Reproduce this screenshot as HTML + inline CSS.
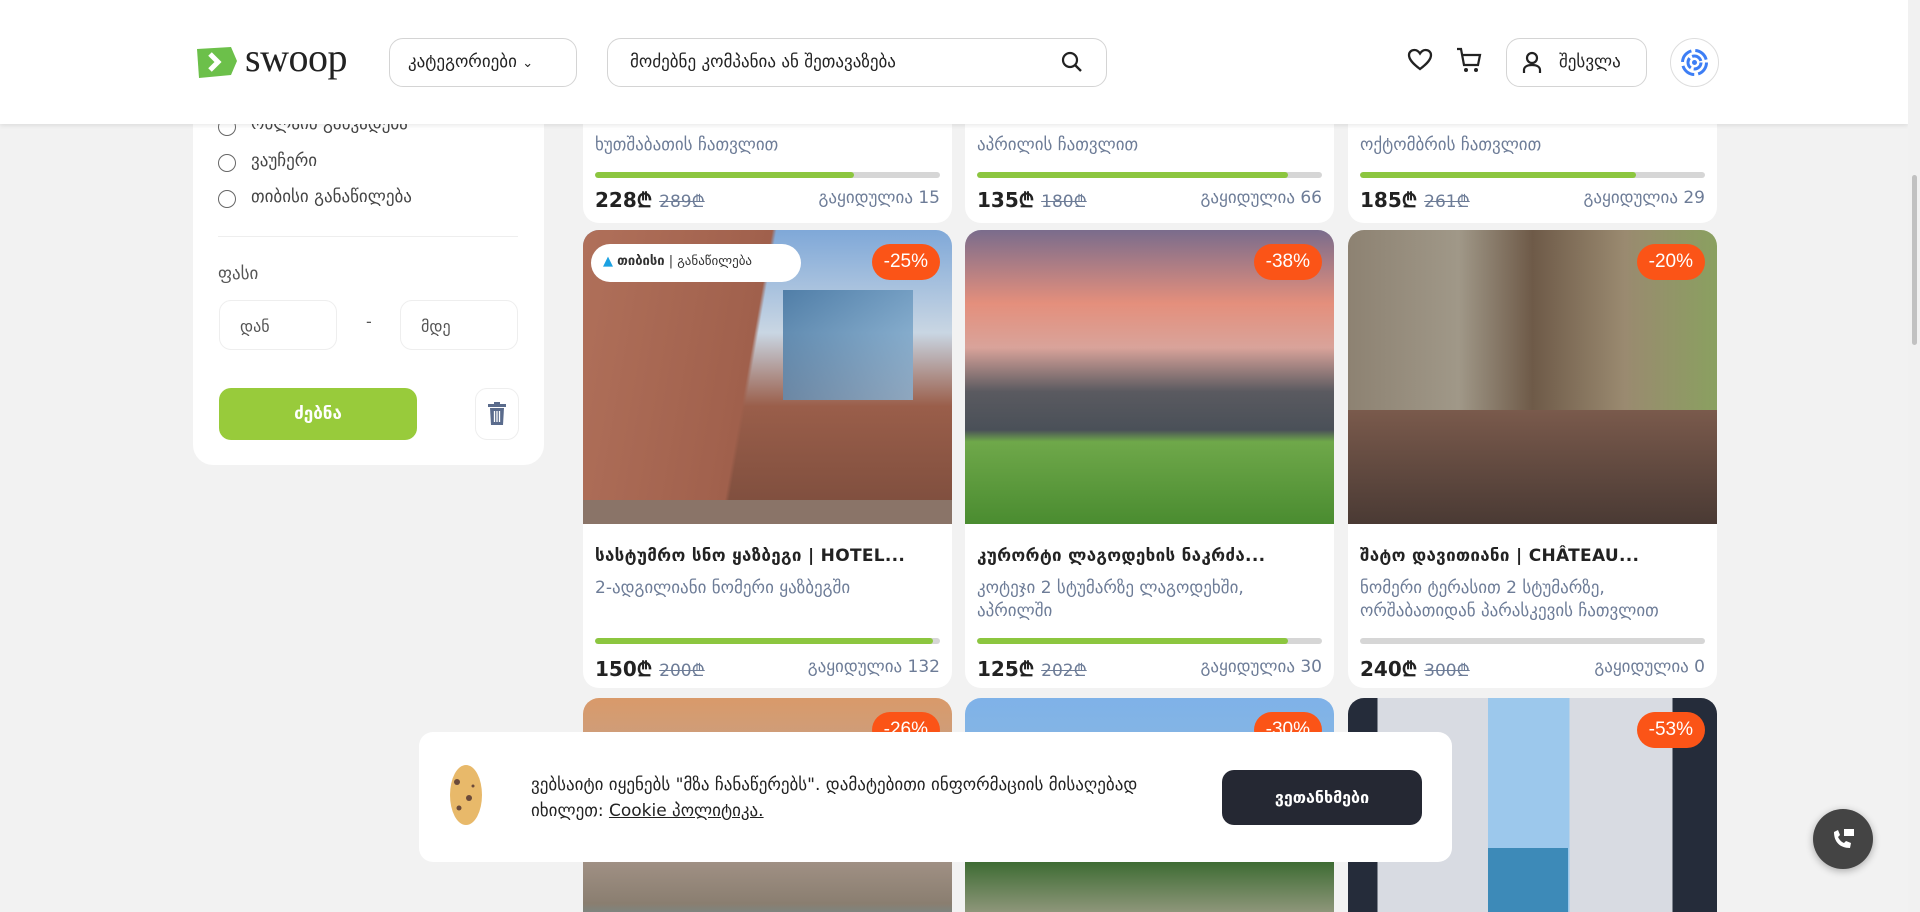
<!DOCTYPE html>
<html><head><meta charset="utf-8"><style>
*{box-sizing:border-box;margin:0;padding:0}
html,body{width:1920px;height:912px;overflow:hidden}
body{background:#f2f2f2;font-family:"DejaVu Sans","Liberation Sans",sans-serif;position:relative;color:#222}
.a{position:absolute}
.hdr{left:0;top:0;width:1908px;height:124px;background:#fff;box-shadow:0 2px 4px rgba(0,0,0,.08);z-index:5}
.sb{left:1908px;top:0;width:12px;height:912px;background:#f1f1f1;z-index:6}
.thumb{left:1912px;top:175px;width:5px;height:170px;background:#c1c1c1;border-radius:3px;z-index:7}
.btn{border:1px solid #d4d4d4;border-radius:14px;background:#fff}
.side{left:193px;top:100px;width:351px;height:365px;background:#fff;border-radius:0 0 20px 20px}
.radio{width:18px;height:18px;border:1.5px solid #666;border-radius:50%}
.rl{font-size:17px;color:#444}
.inp{border:1px solid #eee;border-radius:12px;background:#fff;font-size:16px;color:#555;padding:16px 20px}
.card{background:#fff;border-radius:16px;overflow:hidden;width:369px}
.img{position:absolute;left:0;top:0;width:369px;height:294px}
.badge{position:absolute;right:12px;top:14px;background:#fb5417;color:#fff;border-radius:18px;padding:7px 12px;font-family:"Liberation Sans",sans-serif;font-size:19px}
.tt{position:absolute;left:12px;top:316px;font-size:17px;font-weight:bold;white-space:nowrap;color:#222;letter-spacing:.3px}
.ds{position:absolute;left:12px;font-size:17px;color:#6d7c97;line-height:23px;width:345px}
.bar{position:absolute;left:12px;width:345px;height:6px;border-radius:3px;background:#d6d6d6;overflow:hidden}
.bar i{display:block;height:6px;background:#8cc63f;border-radius:3px}
.pr{position:absolute;left:12px;font-size:20px;font-weight:bold;color:#222}
.pr s{font-size:17px;font-weight:normal;color:#6d7c97}
.sold{position:absolute;right:12px;font-size:17px;color:#6d7c97}
</style></head><body>
<div class="a hdr">
 <svg class="a" style="left:193px;top:45px" width="46" height="34" viewBox="0 0 46 34"><path d="M4 4 L38 2 L44 16 L38 30 L6 33 Z" fill="#6cc04a"/><path d="M17 9 L25 17 L17 25" stroke="#fff" stroke-width="5" fill="none"/></svg>
 <div class="a" style="left:245px;top:34px;font:40px 'Liberation Serif',serif;color:#222;letter-spacing:-.5px">swoop</div>
 <div class="a btn" style="left:389px;top:38px;width:188px;height:49px;font-size:17px;padding:13px 18px">კატეგორიები <span style="font-size:13px">&#8964;</span></div>
 <div class="a btn" style="left:607px;top:38px;width:500px;height:49px;font-size:17px;padding:13px 22px">მოძებნე კომპანია ან შეთავაზება</div>
 <svg class="a" style="left:1061px;top:51px" width="22" height="22" viewBox="0 0 22 22"><circle cx="9" cy="9" r="7" stroke="#222" stroke-width="2.2" fill="none"/><path d="M14 14 L20 20" stroke="#222" stroke-width="2.4"/></svg>
 <svg class="a" style="left:1407px;top:48px" width="26" height="24" viewBox="0 0 26 24"><path d="M13 21 C5 15 2 11 2 7 C2 4 4.5 2 7.5 2 C10 2 12 4 13 5.5 C14 4 16 2 18.5 2 C21.5 2 24 4 24 7 C24 11 21 15 13 21Z" stroke="#222" stroke-width="2.3" fill="none"/></svg>
 <svg class="a" style="left:1455px;top:46px" width="28" height="28" viewBox="0 0 28 28"><path d="M2 3 H6 L9 19 H23 L25 9 H7" stroke="#222" stroke-width="2.2" fill="none"/><circle cx="11" cy="24" r="2" fill="#222"/><circle cx="21" cy="24" r="2" fill="#222"/></svg>
 <div class="a btn" style="left:1506px;top:38px;width:141px;height:49px;font-size:17px;padding:13px 0 0 52px">შესვლა</div>
 <svg class="a" style="left:1521px;top:51px" width="22" height="24" viewBox="0 0 22 24"><circle cx="11" cy="7" r="5" stroke="#222" stroke-width="2.2" fill="none"/><path d="M3 22 V19 C3 16 6 14 11 14 C16 14 19 16 19 19 V22" stroke="#222" stroke-width="2.2" fill="none"/></svg>
 <div class="a" style="left:1670px;top:38px;width:49px;height:49px;border:1px solid #ddd;border-radius:50%"></div>
 <svg class="a" style="left:1679px;top:47px" width="31" height="31" viewBox="0 0 31 31"><circle cx="15.5" cy="15.5" r="12" stroke="#3d7ef5" stroke-width="3" fill="none" stroke-dasharray="15 4"/><circle cx="15.5" cy="15.5" r="6.5" stroke="#3d7ef5" stroke-width="3" fill="none" stroke-dasharray="11 3"/><circle cx="15.5" cy="15.5" r="2.5" fill="#3d7ef5"/></svg>
</div>
<div class="a sb"></div><div class="a thumb"></div>

<div class="a side">
 <div class="a radio" style="left:25px;top:18px"></div><div class="a rl" style="left:58px;top:14px">ონლაინ განვადება</div>
 <div class="a radio" style="left:25px;top:54px"></div><div class="a rl" style="left:58px;top:51px">ვაუჩერი</div>
 <div class="a radio" style="left:25px;top:90px"></div><div class="a rl" style="left:58px;top:87px">თიბისი განაწილება</div>
 <div class="a" style="left:25px;top:136px;width:300px;height:1px;background:#eee"></div>
 <div class="a" style="left:25px;top:164px;font-size:17px;color:#555">ფასი</div>
 <div class="a inp" style="left:26px;top:200px;width:118px;height:50px">დან</div>
 <div class="a" style="left:173px;top:212px;color:#555">-</div>
 <div class="a inp" style="left:207px;top:200px;width:118px;height:50px">მდე</div>
 <div class="a" style="left:26px;top:288px;width:198px;height:52px;background:#98cb3b;border-radius:12px;color:#fff;font-weight:bold;font-size:17px;text-align:center;line-height:52px">ძებნა</div>
 <div class="a" style="left:282px;top:288px;width:44px;height:52px;border:1px solid #eee;border-radius:12px"></div>
 <svg class="a" style="left:294px;top:302px" width="20" height="24" viewBox="0 0 20 24"><rect x="1" y="2" width="18" height="3" fill="#5a6b8c"/><rect x="7" y="0" width="6" height="3" fill="#5a6b8c"/><path d="M3 6 H17 L16 23 H4 Z" fill="#5a6b8c"/><path d="M7.5 9 V20 M10 9 V20 M12.5 9 V20" stroke="#fff" stroke-width="1.3"/></svg>
</div>

<div class="a card" style="left:583px;top:100px;height:123px">
 <div class="ds" style="top:34px">ხუთშაბათის ჩათვლით</div>
 <div class="bar" style="top:72px"><i style="width:75%"></i></div>
 <div class="pr" style="top:86px">228₾ <s>289₾</s></div><div class="sold" style="top:88px">გაყიდულია 15</div>
</div>
<div class="a card" style="left:965px;top:100px;height:123px">
 <div class="ds" style="top:34px">აპრილის ჩათვლით</div>
 <div class="bar" style="top:72px"><i style="width:90%"></i></div>
 <div class="pr" style="top:86px">135₾ <s>180₾</s></div><div class="sold" style="top:88px">გაყიდულია 66</div>
</div>
<div class="a card" style="left:1348px;top:100px;height:123px">
 <div class="ds" style="top:34px">ოქტომბრის ჩათვლით</div>
 <div class="bar" style="top:72px"><i style="width:80%"></i></div>
 <div class="pr" style="top:86px">185₾ <s>261₾</s></div><div class="sold" style="top:88px">გაყიდულია 29</div>
</div>

<div class="a card" style="left:583px;top:230px;height:458px">
 <div class="img" style="background:linear-gradient(100deg,#b0705a 0%,#a0604c 45%,transparent 46%),linear-gradient(180deg,#7fa8d8 0%,#c9d6e3 35%,#9a5e4a 60%,#7a4c3c 100%)"></div>
 <div class="a" style="left:200px;top:60px;width:130px;height:110px;background:linear-gradient(135deg,#3a6d9a,#8bb6d8);opacity:.8"></div>
 <div class="a" style="left:0;top:270px;width:369px;height:24px;background:#8a7468"></div>
 <div class="a" style="left:8px;top:14px;width:210px;height:38px;background:#fff;border-radius:19px;font-size:13px;color:#333;padding:10px 0 0 12px"><span style="color:#1ba1e2">▲</span> <b>თიბისი</b> | განაწილება</div>
 <div class="badge">-25%</div>
 <div class="tt">სასტუმრო სნო ყაზბეგი | HOTEL...</div>
 <div class="ds" style="top:347px">2-ადგილიანი ნომერი ყაზბეგში</div>
 <div class="bar" style="top:408px"><i style="width:98%"></i></div>
 <div class="pr" style="top:425px">150₾ <s>200₾</s></div><div class="sold" style="top:427px">გაყიდულია 132</div>
</div>
<div class="a card" style="left:965px;top:230px;height:458px">
 <div class="img" style="background:linear-gradient(180deg,#7a6c8c 0%,#e48f7c 25%,#d9a39a 40%,#5a5a60 55%,#4a5058 68%,#6fa84a 72%,#4a8c30 100%)"></div>
 <div class="badge">-38%</div>
 <div class="tt">კურორტი ლაგოდეხის ნაკრძა...</div>
 <div class="ds" style="top:347px;width:300px">კოტეჯი 2 სტუმარზე ლაგოდეხში, აპრილში</div>
 <div class="bar" style="top:408px"><i style="width:90%"></i></div>
 <div class="pr" style="top:425px">125₾ <s>202₾</s></div><div class="sold" style="top:427px">გაყიდულია 30</div>
</div>
<div class="a card" style="left:1348px;top:230px;height:458px">
 <div class="img" style="background:linear-gradient(90deg,#8d8272 0%,#a09888 30%,#6e5a48 50%,#9a8a70 75%,#8aa060 100%)"></div>
 <div class="a" style="left:0;top:180px;width:369px;height:114px;background:linear-gradient(180deg,#7a5a4c,#4a3a34)"></div>
 <div class="badge">-20%</div>
 <div class="tt">შატო დავითიანი | CHÂTEAU...</div>
 <div class="ds" style="top:347px">ნომერი ტერასით 2 სტუმარზე, ორშაბათიდან პარასკევის ჩათვლით</div>
 <div class="bar" style="top:408px"><i style="width:0"></i></div>
 <div class="pr" style="top:425px">240₾ <s>300₾</s></div><div class="sold" style="top:427px">გაყიდულია 0</div>
</div>

<div class="a card" style="left:583px;top:698px;height:214px;border-radius:16px 16px 0 0">
 <div class="img" style="background:linear-gradient(180deg,#d99a6a 0%,#b8a49a 40%,#8a7e70 70%,#4aa0c0 85%,#5a5048 100%)"></div>
 <div class="badge">-26%</div>
</div>
<div class="a card" style="left:965px;top:698px;height:214px;border-radius:16px 16px 0 0">
 <div class="img" style="background:linear-gradient(180deg,#7fb2e8 0%,#8ab8e0 30%,#3a6a30 55%,#b0a898 80%,#d8d0c4 100%)"></div>
 <div class="badge">-30%</div>
</div>
<div class="a card" style="left:1348px;top:698px;height:214px;border-radius:16px 16px 0 0">
 <div class="img" style="background:linear-gradient(90deg,#252c3a 0 8%,#d8dbe2 8% 38%,#9cc8ec 38% 60%,#d8dbe2 60% 88%,#252c3a 88%)"></div>
 <div class="a" style="left:140px;top:150px;width:80px;height:64px;background:#3d8ab8"></div>
 <div class="badge">-53%</div>
</div>

<div class="a" style="left:419px;top:732px;width:1033px;height:130px;background:#fff;border-radius:14px;z-index:3">
 <svg class="a" style="left:30px;top:32px" width="34" height="62" viewBox="0 0 34 62"><ellipse cx="17" cy="31" rx="16" ry="30" fill="#e8b96a"/><circle cx="8" cy="18" r="3" fill="#6b4a3a"/><circle cx="20" cy="34" r="3" fill="#6b4a3a"/><circle cx="10" cy="44" r="2.5" fill="#6b4a3a"/><circle cx="24" cy="22" r="1.5" fill="#6b4a3a"/></svg>
 <div class="a" style="left:112px;top:40px;font-size:17px;line-height:26px;color:#222;width:650px">ვებსაიტი იყენებს "მზა ჩანაწერებს". დამატებითი ინფორმაციის მისაღებად იხილეთ: <u>Cookie პოლიტიკა.</u></div>
 <div class="a" style="left:803px;top:38px;width:200px;height:55px;background:#252833;border-radius:12px;color:#fff;font-weight:bold;font-size:16px;text-align:center;line-height:55px">ვეთანხმები</div>
</div>

<div class="a" style="left:1813px;top:809px;width:60px;height:60px;border-radius:50%;background:#444;box-shadow:0 2px 8px rgba(0,0,0,.3)"></div>
<svg class="a" style="left:1830px;top:826px" width="26" height="26" viewBox="0 0 26 26"><path d="M4 6 C4 16 10 22 20 22 L21 17 L16 15 L14 17 C11 16 9 13 8 11 L10 9 L8 4 Z" fill="#fff"/><rect x="14" y="3" width="10" height="7" fill="#fff"/></svg>
</body></html>
